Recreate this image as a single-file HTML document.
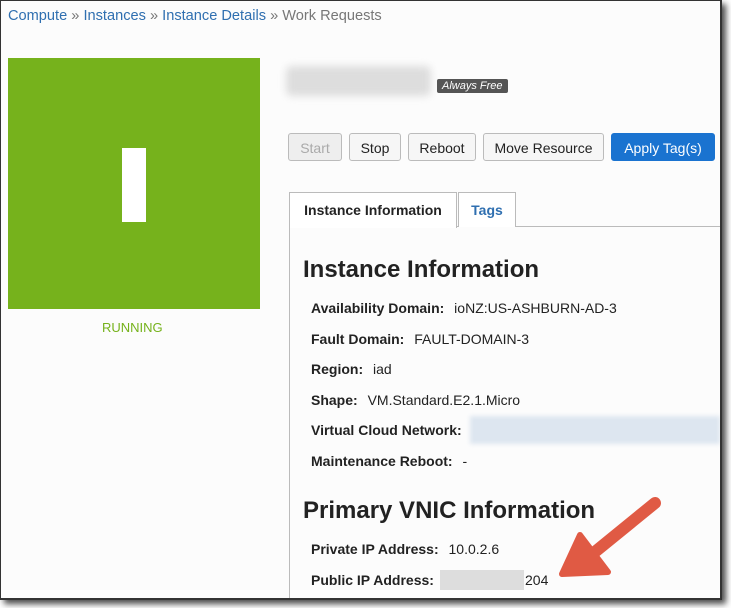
<!DOCTYPE html>
<html><head><style>
body{margin:0;width:731px;height:608px;background:#fff;position:relative;overflow:hidden;font-family:"Liberation Sans",Arial,sans-serif;}
.frame{position:absolute;left:0;top:0;width:719px;height:597px;background:#fcfcfc;border:1px solid #333;border-right:2px solid #333;border-bottom:2px solid #333;box-shadow:4px 4px 6px rgba(0,0,0,.7);overflow:hidden}
.in{position:absolute;left:-1px;top:-1px;width:731px;height:608px}
.a{position:absolute;white-space:nowrap}
.bc{left:8px;top:8px;font-size:14.6px;color:#2f6fb0}
.bc span{color:#777}
.green{left:8px;top:58px;width:252px;height:251px;background:#76b21c}
.bar{left:122px;top:148px;width:24px;height:74px;background:#fff}
.run{left:102px;top:320px;font-size:13px;color:#76b21c}
.title{left:286px;top:66px;width:145px;height:30px;background:#ddd;filter:blur(4px);border-radius:6px}
.free{left:437px;top:79px;background:#555;color:#fff;font-size:11px;font-style:italic;padding:1px 5px;border-radius:2px}
.btn{top:133px;height:28px;border:1px solid #bbb;border-radius:3px;background:#f6f6f6;font-size:14px;line-height:28px;text-align:center;color:#222;box-sizing:border-box}
.tab{top:192px;height:35px;border:1px solid #bbb;border-bottom:none;background:#fff;font-size:14px;font-weight:bold;line-height:34px;text-align:center;box-sizing:border-box}
.h{font-size:24px;font-weight:bold;color:#222;left:303px}
.r{left:311px;font-size:14px;color:#222}
.r b{margin-right:6px}
</style></head><body>
<div class="frame"><div class="in">
<div class="a bc">Compute <span>»</span> Instances <span>»</span> Instance Details <span>» Work Requests</span></div>
<div class="a green"></div><div class="a bar"></div>
<div class="a run">RUNNING</div>
<div class="a title"></div>
<div class="a free">Always Free</div>
<div class="a btn" style="left:288px;width:54px;color:#aaa;background:#eee">Start</div>
<div class="a btn" style="left:349px;width:52px">Stop</div>
<div class="a btn" style="left:408px;width:68px">Reboot</div>
<div class="a btn" style="left:483px;width:121px">Move Resource</div>
<div class="a btn" style="left:611px;width:104px;background:#1a73d0;border-color:#1a73d0;color:#fff">Apply Tag(s)</div>
<div class="a" style="left:289px;top:226px;width:440px;height:1px;background:#bbb"></div>
<div class="a" style="left:289px;top:226px;width:1px;height:380px;background:#bbb"></div>
<div class="a tab" style="left:289px;width:168px;height:36px;color:#222">Instance Information</div>
<div class="a tab" style="left:458px;width:58px;color:#2f6fb0">Tags</div>
<div class="a h" style="top:256px">Instance Information</div>
<div class="a r" style="top:300px"><b>Availability Domain:</b> ioNZ:US-ASHBURN-AD-3</div>
<div class="a r" style="top:331px"><b>Fault Domain:</b> FAULT-DOMAIN-3</div>
<div class="a r" style="top:361px"><b>Region:</b> iad</div>
<div class="a r" style="top:392px"><b>Shape:</b> VM.Standard.E2.1.Micro</div>
<div class="a r" style="top:422px"><b>Virtual Cloud Network:</b></div>
<div class="a" style="left:470px;top:416px;width:250px;height:28px;background:#dde6f0;filter:blur(2px)"></div>
<div class="a r" style="top:453px"><b>Maintenance Reboot:</b> -</div>
<div class="a h" style="top:497px">Primary VNIC Information</div>
<div class="a r" style="top:541px"><b>Private IP Address:</b> 10.0.2.6</div>
<div class="a r" style="top:572px"><b>Public IP Address:</b></div>
<div class="a" style="left:440px;top:570px;width:84px;height:20px;background:#ddd"></div>
<div class="a r" style="left:525px;top:572px">204</div>
<svg class="a" style="left:540px;top:490px" width="140" height="100">
<line x1="115" y1="13" x2="45" y2="70" stroke="#e05a44" stroke-width="12" stroke-linecap="round"/>
<polygon points="22,84 40,45 68,82" fill="#e05a44" stroke="#e05a44" stroke-width="6" stroke-linejoin="round"/>
</svg>
</div></div>
</body></html>
